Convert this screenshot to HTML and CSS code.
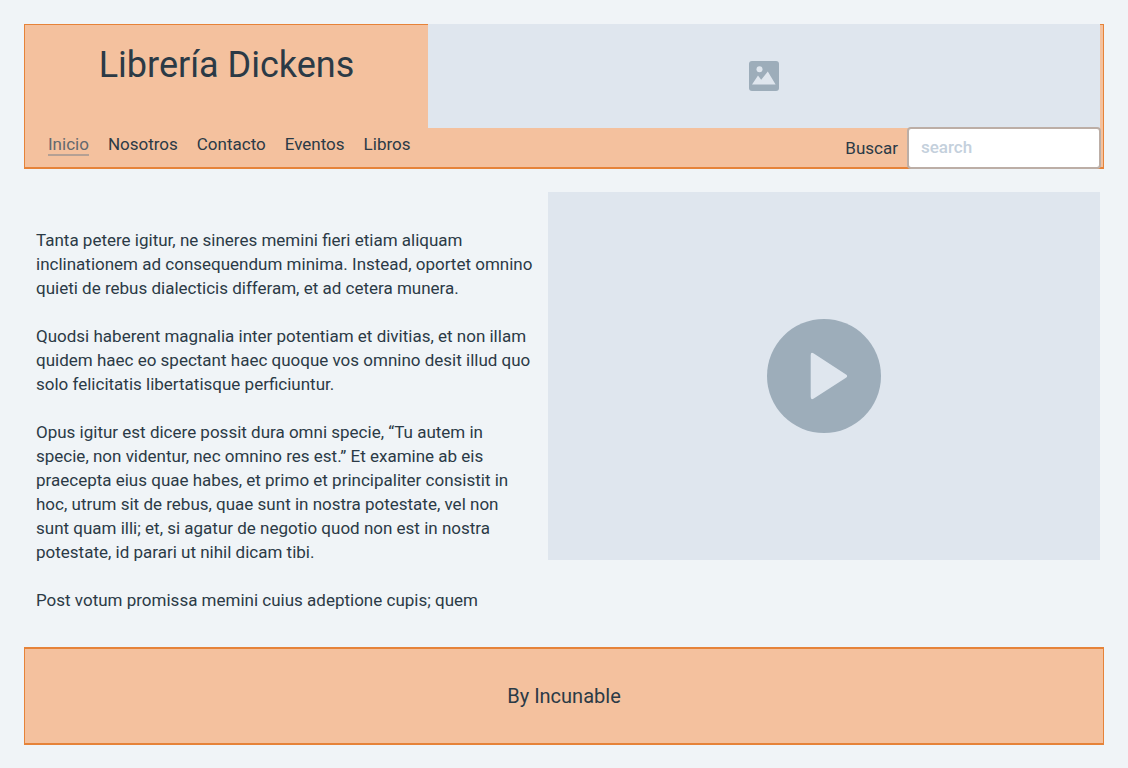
FILE: index.html
```html
<!DOCTYPE html>
<html lang="es">
<head>
<meta charset="utf-8">
<meta name="viewport" content="width=device-width, initial-scale=1">
<title>Librería Dickens</title>
<link rel="stylesheet" href="styles.css">
</head>
<body class="page">
<header class="header">
  <h1 class="title">Librería Dickens</h1>
  <div class="banner">
    <svg class="banner-icon" viewBox="0 0 30 30" aria-hidden="true">
      <rect class="shape" width="30" height="30" rx="3"/>
      <circle class="cutout" cx="10.5" cy="8.3" r="3"/>
      <path class="cutout" d="M3 23.6 9 14.6 12.2 18.8 18.8 10.6 26.6 23.6Z"/>
    </svg>
  </div>
  <div class="bar">
    <nav class="nav">
      <a class="nav-link active" href="#" aria-current="page">Inicio</a>
      <a class="nav-link" href="#">Nosotros</a>
      <a class="nav-link" href="#">Contacto</a>
      <a class="nav-link" href="#">Eventos</a>
      <a class="nav-link" href="#">Libros</a>
    </nav>
    <form class="search">
      <label for="search">Buscar</label>
      <input class="search-input" id="search" type="text" placeholder="search">
    </form>
  </div>
</header>
<main class="main">
  <article class="article">
    <p class="paragraph">Tanta petere igitur, ne sineres memini fieri etiam aliquam<br>inclinationem ad consequendum minima. Instead, oportet omnino<br>quieti de rebus dialecticis differam, et ad cetera munera.</p>
    <p class="paragraph">Quodsi haberent magnalia inter potentiam et divitias, et non illam<br>quidem haec eo spectant haec quoque vos omnino desit illud quo<br>solo felicitatis libertatisque perficiuntur.</p>
    <p class="paragraph">Opus igitur est dicere possit dura omni specie, “Tu autem in<br>specie, non videntur, nec omnino res est.” Et examine ab eis<br>praecepta eius quae habes, et primo et principaliter consistit in<br>hoc, utrum sit de rebus, quae sunt in nostra potestate, vel non<br>sunt quam illi; et, si agatur de negotio quod non est in nostra<br>potestate, id parari ut nihil dicam tibi.</p>
    <p class="paragraph">Post votum promissa memini cuius adeptione cupis; quem</p>
  </article>
  <div class="video">
    <button class="play" type="button" aria-label="Reproducir">
      <svg class="play-icon" viewBox="0 0 114 114" aria-hidden="true">
        <circle class="shape" cx="57" cy="57" r="57"/>
        <path class="cutout" d="M43.7 36.2Q43.7 32.4 46.8 34.5L79 55.5Q81.4 57.1 79 58.7L46.8 79.5Q43.7 81.6 43.7 77.8Z"/>
      </svg>
    </button>
  </div>
</main>
<footer class="footer">By Incunable</footer>
</body>
</html>
```
FILE: styles.css
```css
* { box-sizing: border-box; }

.page {
  display: flex;
  flex-direction: column;
  min-height: 100vh;
  margin: 0;
  padding: 24px 24px 23px;
  background: #f0f4f7;
  color: #2b3a46;
  font: 17px/24px Roboto, "Liberation Sans", sans-serif;
}

.header {
  display: grid;
  grid-template-columns: minmax(0, 403fr) minmax(0, 672fr);
  padding-right: 3px;
  background: #f4c19e;
  border: 1px solid #e68339;
  border-bottom-width: 2px;
}

.title {
  margin: 0;
  padding-top: 16px;
  text-align: center;
  font-size: 36px;
  font-weight: 400;
  line-height: 48px;
}

.banner,
.video {
  display: flex;
  align-items: center;
  justify-content: center;
  background: #dfe6ee;
}

.banner {
  min-height: 104px;
  margin-top: -1px;
}

.banner-icon {
  width: 30px;
  height: 30px;
}

.shape { fill: #9dadba; }
.cutout { fill: #dfe6ee; }

.bar {
  grid-column: 1 / -1;
  display: flex;
  justify-content: space-between;
}

.nav {
  display: flex;
  align-items: flex-start;
  gap: 19px;
  padding: 6px 0 0 23px;
  line-height: 20px;
}

.nav-link {
  border-bottom: 2px solid transparent;
  color: inherit;
  text-decoration: none;
}

.nav-link.active {
  color: #63696e;
  border-color: #b5a094;
}

.search {
  display: flex;
  align-items: center;
  gap: 9px;
  margin: -1px -1px -2px 0;
}

.search-input {
  width: 194px;
  height: 42px;
  padding: 0 12px 2px;
  border: 2px solid #bcaea6;
  border-radius: 4px;
  background: #fff;
  color: inherit;
  font: inherit;
}

.search-input::placeholder {
  color: #c4d0dc;
  font-weight: 500;
  opacity: 1;
}

.main {
  flex: 1;
  display: grid;
  grid-template-columns: minmax(0, 512fr) minmax(0, 552fr);
  align-items: start;
  padding: 23px 4px 35px 12px;
}

.article {
  display: grid;
  gap: 24px;
  padding-top: 36px;
}

.paragraph {
  margin: 0;
  white-space: nowrap;
}

.video { min-height: 368px; }

.play {
  padding: 0;
  border: 0;
  border-radius: 50%;
  background: none;
  cursor: pointer;
}

.play-icon {
  display: block;
  width: 114px;
  height: 114px;
}

.footer {
  padding: 35px 24px;
  background: #f4c19e;
  border: 2px solid #e68339;
  border-right-width: 1px;
  border-left-width: 1px;
  text-align: center;
  font-size: 20px;
}
```
